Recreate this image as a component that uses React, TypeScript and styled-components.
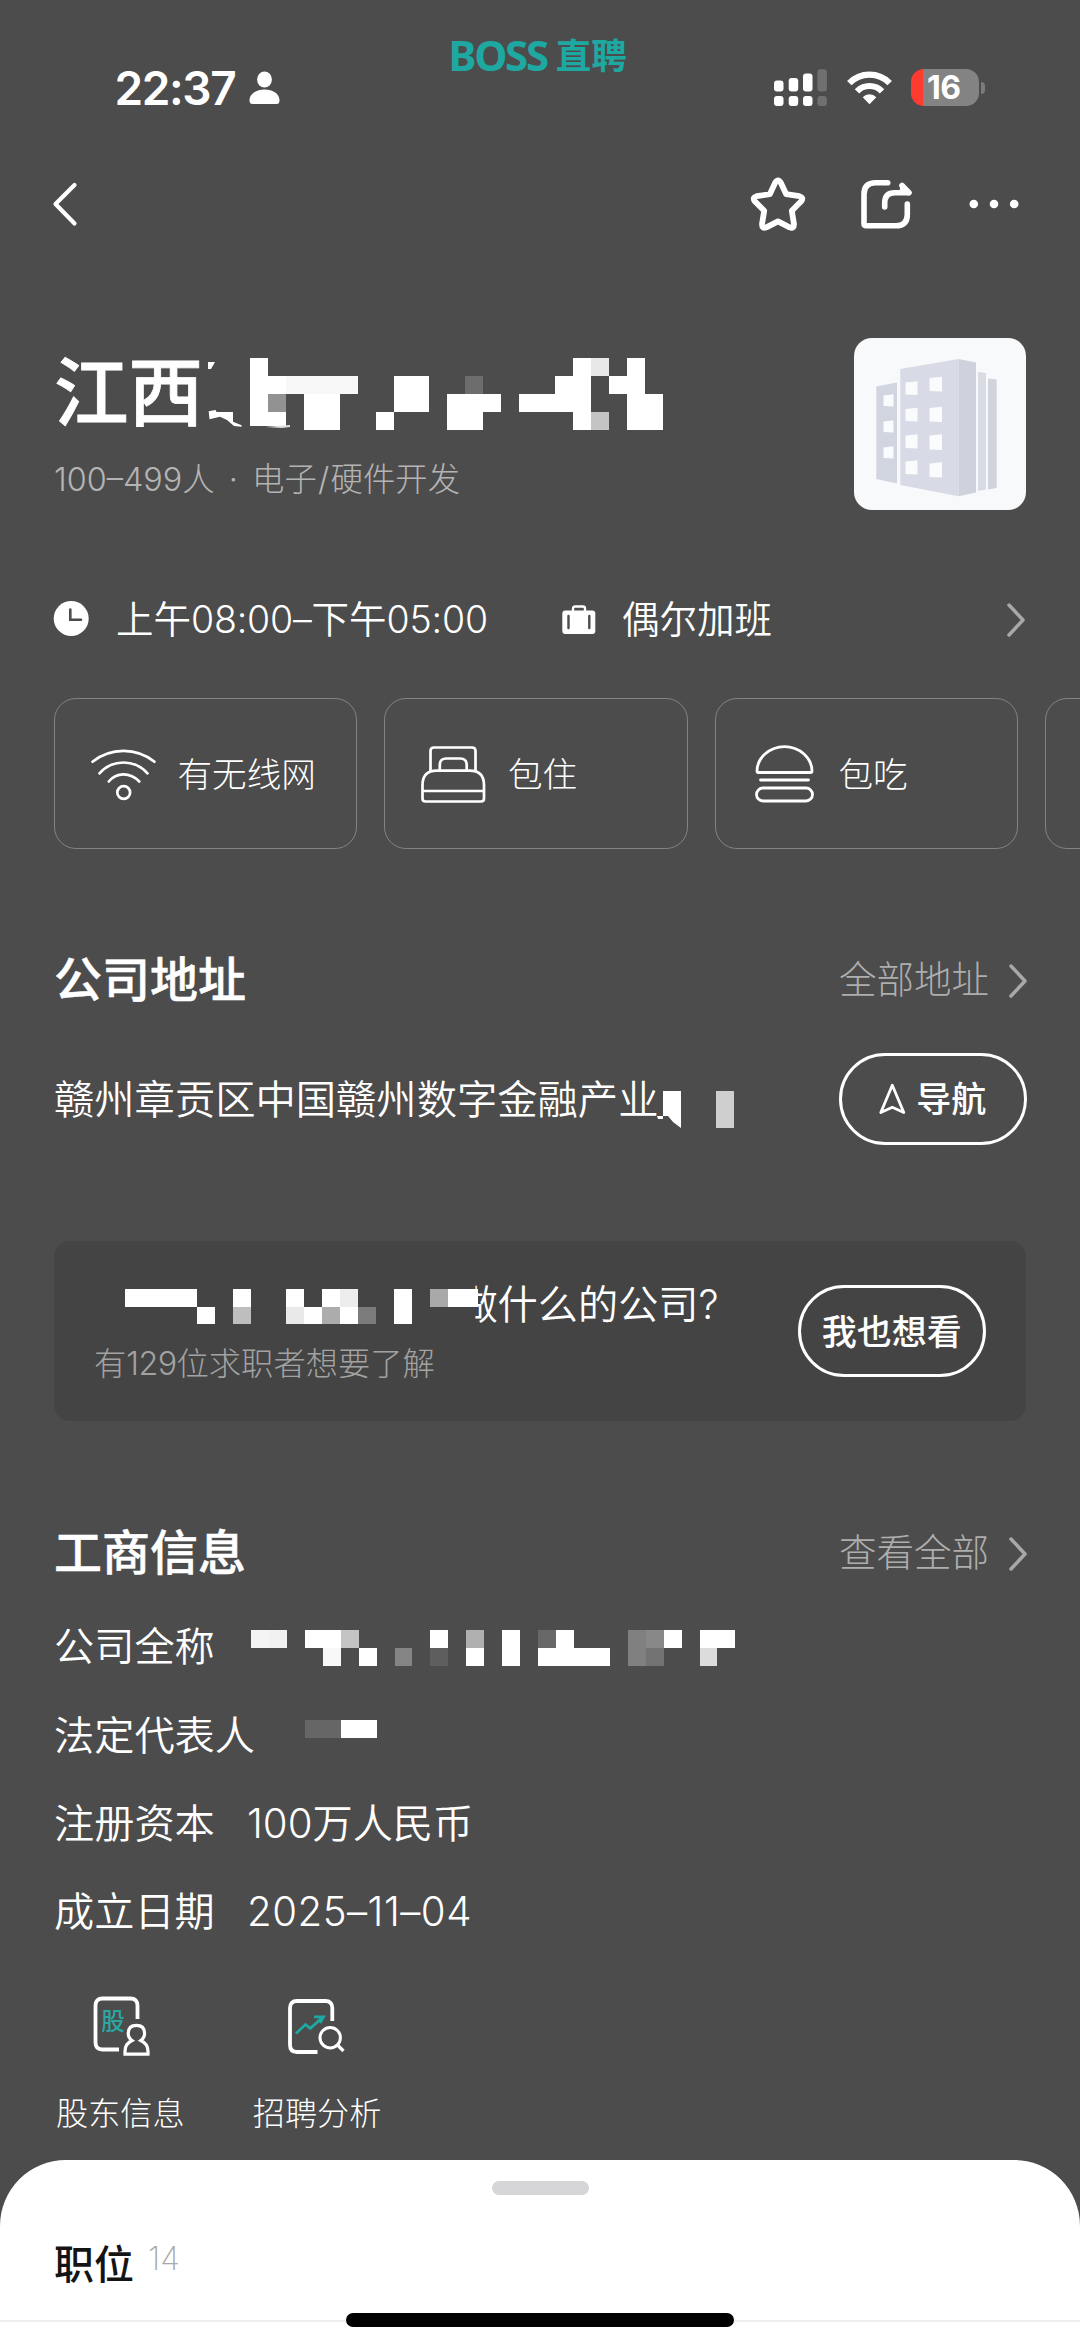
import React from "react";
import styled, { createGlobalStyle } from "styled-components";

const GlobalStyle = createGlobalStyle`
  body {
    margin: 0;
    background: #4c4c4c;
    overflow: hidden;
  }
  * {
    box-sizing: border-box;
  }
`;

const Page = styled.div`
  width: 1080px;
  height: 2348px;
  display: flex;
  flex-direction: column;
  position: relative;
  overflow: hidden;
  background: #4c4c4c;
  color: #fff;
  font-family: Inter, "Noto Sans CJK SC", sans-serif;
  font-weight: 350;
  white-space: nowrap;
`;

/* ---------- status bar ---------- */

const StatusBar = styled.div`
  height: 140px;
  padding: 35px 95px 0 114.5px;
  display: flex;
  align-items: center;
  flex: none;
`;

const Clock = styled.span`
  font-size: 46px;
  font-weight: 600;
  line-height: 52px;
  letter-spacing: -1.4px;
  width: 134px;
`;

const StatusIcons = styled.div`
  margin-left: auto;
  display: flex;
  align-items: center;
  gap: 19.5px;
`;

const Battery = styled.div`
  display: flex;
  align-items: center;
  gap: 2px;
`;

const BatteryBody = styled.div`
  width: 68px;
  height: 37px;
  border-radius: 13px;
  background: linear-gradient(90deg, #ff3b30 0 12px, #838383 12px);
  font-size: 32px;
  font-weight: 650;
  line-height: 37px;
  letter-spacing: -0.6px;
  padding-left: 16px;
`;

const BatteryTip = styled.div`
  width: 4px;
  height: 12px;
  border-radius: 0 4px 4px 0;
  background: #7c7c7c;
`;

const Brand = styled.div`
  position: absolute;
  top: 30px;
  left: 448.5px;
  display: flex;
  align-items: center;
  gap: 9px;
  height: 50px;
  color: #1ea8a2;
  font-family: "Noto Sans", "Noto Sans CJK SC", sans-serif;
  font-weight: 700;
  line-height: 50px;
`;

const BrandLatin = styled.span`
  font-size: 42px;
  letter-spacing: -2.3px;
`;

const BrandHan = styled.span`
  font-size: 35.5px;
`;

/* ---------- navigation ---------- */

const NavBar = styled.div`
  height: 128px;
  padding: 0 56px 0 49px;
  display: flex;
  align-items: center;
  justify-content: space-between;
  flex: none;
`;

const NavActions = styled.div`
  display: flex;
  align-items: center;
  gap: 48px;
`;

/* ---------- company header ---------- */

const Header = styled.div`
  margin: 70px 54px 0;
  height: 172px;
  display: flex;
  justify-content: space-between;
  flex: none;
`;

const HeaderText = styled.div`
  padding-top: 15px;
  display: flex;
  flex-direction: column;
  gap: 27px;
`;

const TitleLine = styled.div`
  display: flex;
  align-items: center;
  height: 80px;
`;

const Title = styled.span`
  width: 150px;
  font-size: 74.5px;
  font-weight: 500;
  line-height: 80px;
  -webkit-text-stroke: 0.8px #fff;
`;

const Subtitle = styled.div`
  font-size: 32.4px;
  font-weight: 300;
  line-height: 40px;
  color: #b4b4b4;
`;

const Spaced = styled.span<{ $gap: number }>`
  margin: 0 ${(p) => p.$gap}px;
`;

const LogoBox = styled.div`
  width: 172px;
  height: 172px;
  border-radius: 18px;
  background: #f8f9fb;
`;

/* ---------- working hours ---------- */

const HoursRow = styled.div`
  margin: 79px 54px 0 53px;
  height: 60px;
  display: flex;
  align-items: center;
  flex: none;
  font-size: 37.5px;
  line-height: 60px;
`;

const HoursText = styled.span<{ $width?: number }>`
  margin-left: 26px;
  padding-top: 1px;
  width: ${(p) => (p.$width ? p.$width + "px" : "auto")};
`;

const Num = styled.span<{ $track?: number }>`
  letter-spacing: ${(p) => p.$track ?? 0}px;
`;

const PushRight = styled.div`
  margin-left: auto;
  display: flex;
  align-items: center;
`;

/* ---------- benefits ---------- */

const Benefits = styled.div`
  margin: 49px 0 0 53.5px;
  display: flex;
  gap: 27px;
  overflow: hidden;
  flex: none;
`;

const Benefit = styled.div`
  width: 303.5px;
  height: 151px;
  flex: none;
  border: 1.5px solid #838383;
  border-radius: 22px;
  padding-left: 35px;
  display: flex;
  align-items: center;
  gap: 20px;
  font-size: 34.6px;
  font-weight: 300;
  line-height: 50px;
`;

/* ---------- sections ---------- */

const SectionHead = styled.div<{ $top: number }>`
  margin: ${(p) => p.$top}px 52px 0 54px;
  height: 60px;
  display: flex;
  align-items: center;
  justify-content: space-between;
  flex: none;
`;

const SectionTitle = styled.h2`
  margin: 0;
  padding-top: 2px;
  font-size: 48px;
  font-weight: 500;
  line-height: 60px;
  -webkit-text-stroke: 0.5px #fff;
`;

const MoreLink = styled.div`
  display: flex;
  align-items: center;
  gap: 19px;
  padding-top: 2px;
  color: #aeaeae;
  font-size: 37.5px;
  font-weight: 300;
  line-height: 54px;
`;

const AddressRow = styled.div`
  margin: 43px 53px 0 54px;
  height: 93px;
  display: flex;
  align-items: center;
  flex: none;
`;

const AddressText = styled.span`
  width: 603px;
  padding-top: 2px;
  font-size: 40.3px;
  line-height: 60px;
`;

const PillButton = styled.button`
  margin: 0 0 0 auto;
  width: 188.5px;
  height: 92px;
  border: 3px solid #fff;
  border-radius: 46px;
  background: transparent;
  color: #fff;
  display: flex;
  align-items: center;
  justify-content: center;
  gap: 10px;
  padding: 1px 0 0;
  font-family: inherit;
  font-size: 35px;
  font-weight: 500;
  line-height: 50px;
`;

/* ---------- question card ---------- */

const QuestionCard = styled.div`
  margin: 96px 54px 0;
  height: 180px;
  border-radius: 16px;
  background: #444;
  padding: 0 40px;
  display: flex;
  align-items: center;
  flex: none;
`;

const QuestionBody = styled.div`
  display: flex;
  flex-direction: column;
  gap: 9px;
`;

const QuestionLine = styled.div`
  display: flex;
  align-items: center;
  height: 56px;
  padding: 1px 0 0 31px;
  font-size: 40.2px;
  line-height: 56px;
`;

const HalfHidden = styled.span`
  margin-left: -21px;
  clip-path: inset(0 0 0 18px);
`;

const QuestionNote = styled.div`
  font-size: 32.3px;
  font-weight: 300;
  line-height: 44px;
  color: #a2a2a2;
`;

/* ---------- registry rows ---------- */

const InfoList = styled.dl`
  margin: 21px 54px 0;
  display: flex;
  flex-direction: column;
  flex: none;
`;

const InfoRow = styled.div`
  height: 88.4px;
  display: flex;
  align-items: center;
  font-size: 40.2px;
  line-height: 60px;
`;

const InfoKey = styled.dt<{ $width: number }>`
  width: ${(p) => p.$width}px;
`;

const InfoValue = styled.dd<{ $track?: number }>`
  margin: 0;
  display: flex;
  letter-spacing: ${(p) => p.$track ?? 0}px;
`;

/* ---------- tools ---------- */

const Tools = styled.div`
  margin: 35px 54px 0 56px;
  display: flex;
  gap: 68px;
  flex: none;
`;

const Tool = styled.div`
  display: flex;
  flex-direction: column;
  align-items: center;
  gap: 34px;
  font-size: 32.2px;
  font-weight: 300;
  line-height: 40px;
`;

/* ---------- bottom sheet ---------- */

const Sheet = styled.div`
  margin-top: 26px;
  height: 188px;
  flex: none;
  border-radius: 66px 66px 0 0;
  background: #fff;
  color: #141414;
  display: flex;
  flex-direction: column;
  align-items: center;
`;

const Handle = styled.div`
  margin-top: 21px;
  width: 97px;
  height: 14px;
  border-radius: 7px;
  background: #d6d6d8;
  flex: none;
`;

const Tab = styled.div`
  align-self: stretch;
  height: 127px;
  border-bottom: 2px solid #efefef;
  padding: 40px 54px 0;
  display: flex;
  align-items: flex-start;
  gap: 14px;
  font-size: 40px;
  font-weight: 500;
  line-height: 60px;
`;

const TabCount = styled.span`
  font-size: 32px;
  font-weight: 200;
  line-height: 47px;
  color: #a9a9a9;
`;

const HomeIndicator = styled.div`
  position: absolute;
  left: 346px;
  top: 2313px;
  width: 388px;
  height: 14px;
  border-radius: 7px;
  background: #000;
`;

/* ---------- drawings ---------- */

const CELL = 17.94;

/* [column, row, columns wide, rows high, colour] */
type Tile = [number, number, number, number, string];

const Drawing = styled.svg<{ $left?: number; $top?: number }>`
  display: block;
  flex: none;
  margin-left: ${(p) => p.$left ?? 0}px;
  margin-top: ${(p) => p.$top ?? 0}px;
`;

function Mosaic(props: { tiles: Tile[]; cols: number; rows: number; left?: number; top?: number; offset?: number; children?: React.ReactNode }) {
  const { tiles, cols, rows, left, top, offset = 0, children } = props;
  return (
    <Drawing $left={left} $top={top} width={cols * CELL + offset} height={rows * CELL}>
      <g shapeRendering="crispEdges">
        {tiles.map(([c, r, w, h, fill], i) => (
          <rect key={i} x={c * CELL + offset} y={r * CELL} width={w * CELL} height={h * CELL} fill={fill} />
        ))}
      </g>
      {children}
    </Drawing>
  );
}

const W = "#fff";

const nameTiles: Tile[] = [
  [0, 0, 1, 3, W], [0, 3, 2, 0.8, W], [1, 1, 1, 1, W], [1, 2, 1, 1, "#929292"],
  [2, 1, 4, 1, "#f8f8f8"], [3, 2, 2, 2, W],
  [7, 3, 1, 1, W], [8, 1, 2, 2, W],
  [11, 2, 3, 1, W], [11, 3, 2, 1, W], [12, 1, 1, 1, "#6d6d6d"],
  [15, 2, 4, 1, W], [17, 1, 2, 1, W], [18, 0, 1, 1, W], [18, 3, 1, 1, W],
  [19, 0, 1, 1, "#e8e8e8"], [19, 3, 1, 1, "#c4c4c4"],
  [20, 1, 2, 1, W], [21, 0, 1, 1, W], [21, 2, 2, 2, W],
];

const questionTiles: Tile[] = [
  [0, 0, 4, 1, W], [4, 1, 1, 1, W], [6, 0, 1, 1, W], [6, 1, 1, 1, "#bebebe"],
  [9, 0, 1, 1, W], [9, 1, 1, 1, "#e9e9e9"], [10, 1, 1, 1, W],
  [11, 0, 1, 1, W], [11, 1, 1, 1, "#acacac"], [12, 0, 1, 1, "#ededed"], [12, 1, 1, 1, W],
  [13, 1, 1, 1, "#7b7b7b"], [15, 0, 1, 2, W], [17, 0, 1, 1, "#a9a9a9"], [18, 0, 1.7, 1, W],
];

const fullNameTiles: Tile[] = [
  [0, 0, 1, 1, "#f4f4f4"], [1, 0, 1, 1, "#f1f1f1"], [3, 0, 2, 1, W], [4, 1, 1, 1, "#f8f8f8"],
  [5, 0, 1, 1, "#c4c4c4"], [6, 1, 1, 1, W], [8, 1, 1, 1, "#848484"],
  [10, 0, 1, 1, W], [10, 1, 1, 1, "#5e5e5e"], [12, 0, 1, 1, "#b0b0b0"], [12, 1, 1, 1, W],
  [14, 0, 1, 2, W], [16, 0, 1, 1, "#686868"], [17, 0, 1, 1, W], [16, 1, 4, 1, W],
  [21, 0, 1, 2, "#808080"], [22, 0, 1, 1, "#888"], [22, 1, 1, 1, "#727272"], [23, 0, 1, 1, W],
  [25, 0, 2, 1, W], [25, 1, 1, 1, "#dcdcdc"],
];

const ownerTiles: Tile[] = [
  [0, 0, 2, 1, "#666"],
  [2, 0, 2, 1, W],
];

function PersonGlyph() {
  return (
    <Drawing width="31" height="34" viewBox="0 0 31 34" fill="#fff">
      <ellipse cx="15.5" cy="8.5" rx="7.4" ry="8" />
      <path d="M.5 29.5C.5 23 7 18.6 15.5 18.6S30.500 23 30.500 29.500Q30.500 33 27.500 33H3.500Q.5 33 .5 29.500Z" />
    </Drawing>
  );
}

function SignalGlyph() {
  return (
    <Drawing width="53" height="38" viewBox="0 0 53 38" fill="#fff">
      <rect x="0" y="11.500" width="9.500" height="11" rx="3" />
      <rect x="14.700" y="9" width="9.500" height="13.500" rx="3" />
      <rect x="29" y="4.500" width="9.500" height="18" rx="3" />
      <rect x="43.400" y=".3" width="9.500" height="22.200" rx="3" fill="#707070" />
      <rect x="0" y="27" width="9.500" height="10" rx="3" />
      <rect x="14.700" y="27" width="9.500" height="10" rx="3" />
      <rect x="29" y="27" width="9.500" height="10" rx="3" />
      <rect x="43.400" y="27" width="9.500" height="10" rx="3" fill="#707070" />
    </Drawing>
  );
}

function WifiGlyph() {
  return (
    <Drawing width="45" height="34" viewBox="0 0 45 34" fill="none" stroke="#fff" strokeWidth="6.200">
      <path d="M2.300 12.200Q10.500 3.600 22.500 3.600T42.700 12.200" />
      <path d="M10 20.300Q15 15 22.500 15T35 20.300" />
      <path d="M15.700 26.200Q18.500 23.200 22.500 23.200T29.300 26.200L22.500 33.300Z" fill="#fff" stroke="none" />
    </Drawing>
  );
}

function BackGlyph() {
  return (
    <Drawing width="30" height="46" viewBox="0 0 30 46" fill="none" stroke="#fff" strokeWidth="4.200" strokeLinecap="round" strokeLinejoin="round">
      <path d="M25.500 4L6.500 23L25.500 42.500" />
    </Drawing>
  );
}

function StarGlyph() {
  return (
    <Drawing width="60" height="60" viewBox="0 0 60 60" fill="none" stroke="#fff" strokeWidth="5.800" strokeLinejoin="round">
      <path d="M27.300 8.600Q30 4.200 32.700 8.600L38.200 20.200L51.500 22.200Q56 23.400 53.200 27.200L43.800 36.800L46 50.200Q46 55 41.600 53.300L30 47.300L18.400 53.300Q14 55 14 50.200L16.200 36.800L6.800 27.200Q4 23.400 8.500 22.200L21.800 20.200Z" />
    </Drawing>
  );
}

function ShareGlyph() {
  return (
    <Drawing width="60" height="60" viewBox="0 0 60 60" fill="none" stroke="#fff" strokeWidth="5.600" strokeLinecap="round" strokeLinejoin="round">
      <path d="M31.700 8.700H19.500Q8 8.700 8 20.200V49.500Q8 51.800 10.300 51.800H40Q51.300 51.800 51.300 40.500V30" />
      <path d="M28.700 33V29Q28.700 18.800 38.900 18.800H51" />
      <path d="M46 11.500L53 18.800" />
      <path d="M45.700 12L52.300 18.600H45Z" fill="#fff" strokeWidth="3" />
    </Drawing>
  );
}

function DotsGlyph() {
  return (
    <Drawing width="60" height="60" viewBox="0 0 60 60" fill="#fff">
      <circle cx="9.800" cy="30" r="4.300" />
      <circle cx="30" cy="30" r="4.300" />
      <circle cx="50.200" cy="30" r="4.300" />
    </Drawing>
  );
}

function BuildingGlyph() {
  const windows: [number, number, number, number][] = [
    [29.500, 57, 10, 11.500], [29.500, 83, 10, 11.500], [29.500, 109, 10, 11.500],
    [51.500, 44, 12, 13], [51.500, 70.500, 12, 13], [51.500, 97, 12, 13.500], [51.500, 123, 12, 13.500],
    [75.500, 39.500, 12.500, 14], [75.500, 69.500, 12.500, 14.500], [75.500, 97, 12.500, 15], [75.500, 125, 12.500, 14.500],
  ];
  return (
    <Drawing width="172" height="172" viewBox="0 0 172 172">
      <path d="M22.300 48.500L43 44.500V145.500L22.300 141Z" fill="#d1d5df" />
      <path d="M46.300 31L104.500 21V158.300L46.300 147Z" fill="#d8dbe5" />
      <path d="M104.500 21L122 24.500V154.500L104.500 158.300Z" fill="#cfd2dd" />
      <path d="M124 34L132 35V151.500L124 153Z" fill="#d9dbe4" />
      <path d="M134 40.500L142.700 41.500V150L134 151.500Z" fill="#d1d3dd" />
      {windows.map(([x, y, w, h], i) => (
        <path key={i} d={`M${x} ${y + 0.6}L${x + w} ${y - 0.8}V${y + h}L${x} ${y + h - 0.5}Z`} fill="#fafbfd" />
      ))}
    </Drawing>
  );
}

function ClockGlyph() {
  return (
    <Drawing width="37" height="37" viewBox="0 0 37 37">
      <circle cx="18.200" cy="17.500" r="17.500" fill="#fff" />
      <path d="M17.300 8.500V18.700H28" fill="none" stroke="#4c4c4c" strokeWidth="2.600" strokeLinecap="round" />
    </Drawing>
  );
}

function CaseGlyph() {
  return (
    <Drawing $top={1} width="34" height="30" viewBox="0 0 34 30">
      <path d="M11 6V3.500Q11 1.500 13 1.500H21Q23 1.500 23 3.500V6" fill="none" stroke="#fff" strokeWidth="2.400" />
      <rect x=".3" y="5.500" width="33" height="23.500" rx="3" fill="#fff" />
      <path d="M6.500 11V23M27.300 11V23" stroke="#4c4c4c" strokeWidth="2.400" strokeLinecap="round" />
    </Drawing>
  );
}

function Chevron() {
  return (
    <Drawing $top={1} width="20" height="36" viewBox="0 0 20 36" fill="none" stroke="#a8a8a8" strokeWidth="3.500" strokeLinecap="round" strokeLinejoin="round">
      <path d="M3 3L17 18L3 33" />
    </Drawing>
  );
}

function ThinWifi() {
  return (
    <Drawing width="68" height="60" viewBox="0 0 68 60" fill="none" stroke="#fff" strokeWidth="2.700" strokeLinecap="round">
      <path d="M2.500 17.700Q16 6.800 33.500 6.800T64.500 17.700" />
      <path d="M9.500 29.300Q19.500 18.500 33.500 18.500T57.500 29.300" />
      <path d="M18.800 37.500Q24.500 30.300 33.500 30.300T49.300 37.500" />
      <circle cx="33.700" cy="48.500" r="6.400" />
    </Drawing>
  );
}

function BedGlyph() {
  return (
    <Drawing width="68" height="60" viewBox="0 0 68 60" fill="none" stroke="#fff" strokeWidth="2.700" strokeLinejoin="round">
      <path d="M10.500 27.500V7Q10.500 3.500 14 3.500H52Q55.500 3.500 55.500 7V27.500" />
      <path d="M19.800 26V21Q19.800 14.500 26.300 14.500H40.200Q46.700 14.500 46.700 21V26" />
      <path d="M2.500 41V54.500Q2.500 57.500 5.500 57.500H61Q64 57.500 64 54.500V41Q64 26.700 49.700 26.700H16.800Q2.500 26.700 2.500 41Z" />
      <path d="M2.500 47H64" />
    </Drawing>
  );
}

function BurgerGlyph() {
  return (
    <Drawing width="68" height="60" viewBox="0 0 68 60" fill="none" stroke="#fff" strokeWidth="2.800" strokeLinejoin="round" strokeLinecap="round">
      <path d="M6 27.500Q6 17 14 10Q22.500 2.700 33.500 2.700T53 10Q61 17 61 27.500Q61 28.500 60 28.500H7Q6 28.500 6 27.500Z" />
      <path d="M9.500 36H57.500" />
      <rect x="5.500" y="44" width="56" height="13" rx="6.500" />
    </Drawing>
  );
}

function NavigateGlyph() {
  return (
    <Drawing width="27" height="32" viewBox="0 0 27 32" fill="none" stroke="#fff" strokeWidth="2.800" strokeLinejoin="round">
      <path d="M13.300 2.200L24.800 29.500L13.300 24.300L1.800 29.500Z" />
    </Drawing>
  );
}

function ShareholderGlyph() {
  return (
    <Drawing $left={3} width="68" height="68" viewBox="0 0 68 68" fill="none" stroke="#fff">
      <path d="M49.500 27V13.500Q49.500 6.500 42.500 6.500H14.500Q7.500 6.500 7.500 13.500V50.500Q7.500 57.500 14.500 57.500H31" strokeWidth="3.800" />
      <path d="M37 62.200V59.200Q37 51.800 44 48.500Q40.200 45.700 40.200 41.200Q40.500 33.300 48.400 33.300Q56.400 33.300 56.600 41.200Q56.600 45.700 52.800 48.500Q60 51.800 60 59.200V62.200Z" strokeWidth="3.200" />
      <text x="13.300" y="37.500" fontSize="23.500" fontWeight="500" fill="#2aa7a2" stroke="none" fontFamily='"Noto Sans CJK SC", sans-serif'>股</text>
    </Drawing>
  );
}

function AnalysisGlyph() {
  return (
    <Drawing $left={1} width="68" height="68" viewBox="0 0 68 68" fill="none" stroke="#fff">
      <path d="M48.300 29V16Q48.300 9 41.300 9H13Q6 9 6 16V53Q6 60 13 60H33.500" strokeWidth="3.800" />
      <circle cx="46.200" cy="45.700" r="10.200" strokeWidth="3" />
      <path d="M53.500 53L59.500 59" strokeWidth="3.200" />
      <path d="M12 41.500L21.500 32.500L26.300 36.300L39 25M30 24.800H39.500L36 31" stroke="#1ea8a2" strokeWidth="2.800" />
    </Drawing>
  );
}

/* ---------- screen ---------- */

const benefits = [
  { label: "有无线网", icon: <ThinWifi /> },
  { label: "包住", icon: <BedGlyph /> },
  { label: "包吃", icon: <BurgerGlyph /> },
  { label: "", icon: null },
];

export default function App() {
  return (
    <Page>
      <GlobalStyle />
      <StatusBar>
        <Clock>22:37</Clock>
        <PersonGlyph />
        <StatusIcons>
          <SignalGlyph />
          <WifiGlyph />
          <Battery>
            <BatteryBody>16</BatteryBody>
            <BatteryTip />
          </Battery>
        </StatusIcons>
      </StatusBar>
      <Brand>
        <BrandLatin>BOSS</BrandLatin>
        <BrandHan>直聘</BrandHan>
      </Brand>

      <NavBar>
        <BackGlyph />
        <NavActions>
          <StarGlyph />
          <ShareGlyph />
          <DotsGlyph />
        </NavActions>
      </NavBar>

      <Header>
        <HeaderText>
          <TitleLine>
            <Title>江西</Title>
            <Mosaic tiles={nameTiles} cols={23} rows={4} offset={46} top={2}>
              <path d="M4 4H11L7 11H4Z" fill="#fff" />
              <path d="M4.700 53.300L11.600 52L12.500 54H29V63.700L37.600 67.300V68.700L30 68L23 62L16 58.700L5.500 61.300Z" fill="#fff" />
              <path d="M61 69L86 67V69L78 70Z" fill="#ddd" />
            </Mosaic>
          </TitleLine>
          <Subtitle>
            <Num>100–499</Num>人<Spaced $gap={5}> · </Spaced>电子<Spaced $gap={1.2}>/</Spaced>硬件开发
          </Subtitle>
        </HeaderText>
        <LogoBox>
          <BuildingGlyph />
        </LogoBox>
      </Header>

      <HoursRow>
        <ClockGlyph />
        <HoursText $width={446}>
          上午<Num $track={-0.2}>08:00–</Num>下午<Num $track={-0.2}>05:00</Num>
        </HoursText>
        <CaseGlyph />
        <HoursText>偶尔加班</HoursText>
        <PushRight>
          <Chevron />
        </PushRight>
      </HoursRow>

      <Benefits>
        {benefits.map((b, i) => (
          <Benefit key={i}>
            {b.icon}
            {b.label}
          </Benefit>
        ))}
      </Benefits>

      <SectionHead $top={100}>
        <SectionTitle>公司地址</SectionTitle>
        <MoreLink>
          全部地址
          <Chevron />
        </MoreLink>
      </SectionHead>
      <AddressRow>
        <AddressText>赣州章贡区中国赣州数字金融产业</AddressText>
        <Drawing $left={0} $top={21} width="77" height="37">
          <path d="M6 0H24V37L16 31L11 25H6Z" fill="#fff" />
          <path d="M0 25H6V28H1Z" fill="#fff" />
          <rect x="59" y="0" width="18" height="37" fill="#cfcfcf" />
        </Drawing>
        <PillButton>
          <NavigateGlyph />
          导航
        </PillButton>
      </AddressRow>

      <QuestionCard>
        <QuestionBody>
          <QuestionLine>
            <Mosaic tiles={questionTiles} cols={19.7} rows={2} top={3} />
            <HalfHidden>做</HalfHidden>什么的公司?
          </QuestionLine>
          <QuestionNote>
            有<Num $track={-0.6}>129</Num>位求职者想要了解
          </QuestionNote>
        </QuestionBody>
        <PillButton>我也想看</PillButton>
      </QuestionCard>

      <SectionHead $top={101}>
        <SectionTitle>工商信息</SectionTitle>
        <MoreLink>
          查看全部
          <Chevron />
        </MoreLink>
      </SectionHead>
      <InfoList>
        <InfoRow>
          <InfoKey $width={197}>公司全称</InfoKey>
          <Mosaic tiles={fullNameTiles} cols={27} rows={2} top={2} />
        </InfoRow>
        <InfoRow>
          <InfoKey $width={251}>法定代表人</InfoKey>
          <Mosaic tiles={ownerTiles} cols={4} rows={1} top={-14} />
        </InfoRow>
        <InfoRow>
          <InfoKey $width={193}>注册资本</InfoKey>
          <InfoValue>100万人民币</InfoValue>
        </InfoRow>
        <InfoRow>
          <InfoKey $width={193}>成立日期</InfoKey>
          <InfoValue $track={0.5}>2025–11–04</InfoValue>
        </InfoRow>
      </InfoList>

      <Tools>
        <Tool>
          <ShareholderGlyph />
          股东信息
        </Tool>
        <Tool>
          <AnalysisGlyph />
          招聘分析
        </Tool>
      </Tools>

      <Sheet>
        <Handle />
        <Tab>
          职位
          <TabCount>14</TabCount>
        </Tab>
      </Sheet>
      <HomeIndicator />
    </Page>
  );
}
